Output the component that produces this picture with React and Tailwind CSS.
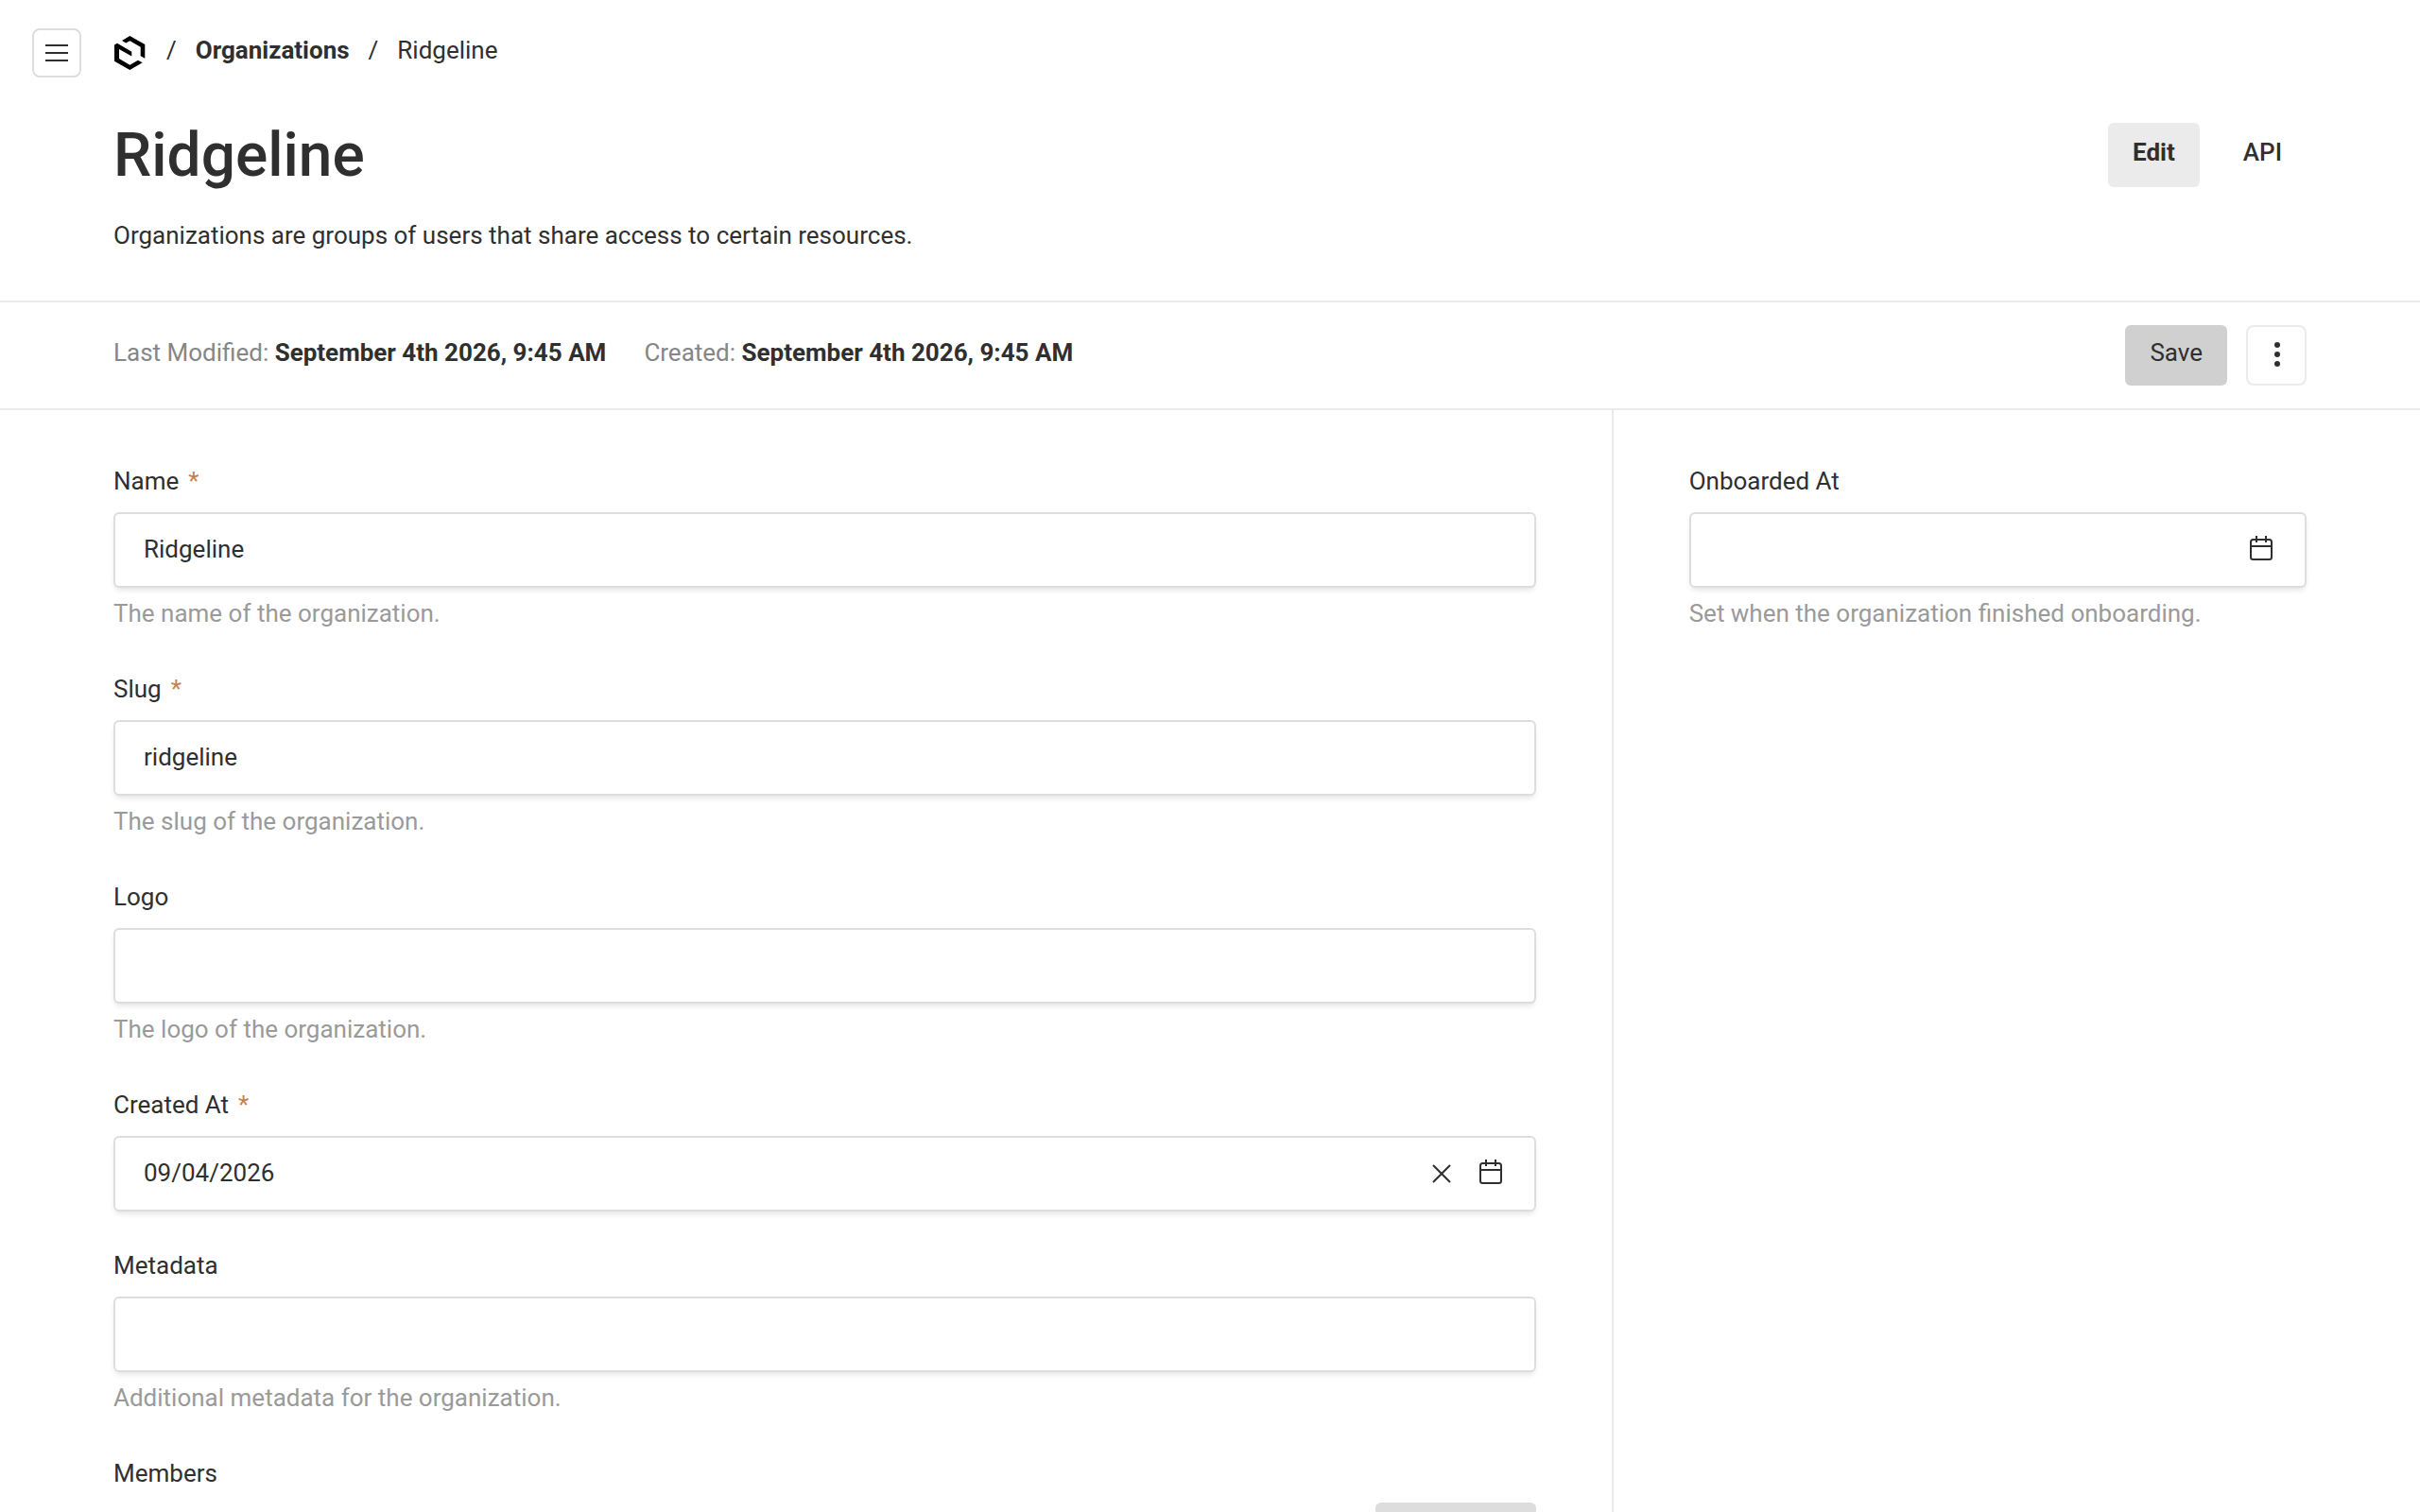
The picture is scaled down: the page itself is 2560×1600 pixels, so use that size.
import React from "react";

function CalendarIcon() {
  return (
    <svg className="size-10" viewBox="0 0 40 40" fill="none" stroke="currentColor" strokeWidth="2" aria-hidden="true">
      <rect x="9" y="9" width="22" height="21" rx="2.5" />
      <path d="M15 5V12M25 5V12M9 16H31" />
    </svg>
  );
}

function CloseIcon() {
  return (
    <svg className="size-10" viewBox="0 0 40 40" fill="none" stroke="currentColor" strokeWidth="2" aria-hidden="true">
      <path d="M29 11L11 29M11 11L29 29" />
    </svg>
  );
}

function Field({ id, label, required, value = "", description, date, clearable }) {
  return (
    <div>
      <label htmlFor={id} className="mb-3.5 block leading-[38px]">
        {label}
        {required && <span className="ml-2.5 text-[#c67f4e]">*</span>}
      </label>
      <div className="flex h-20 items-center rounded-md border-2 border-[#dddddd] bg-white pl-[30px] pr-[26px] shadow-[0_4px_6px_-2px_rgba(0,0,0,0.12)]">
        <input
          id={id}
          type="text"
          defaultValue={value}
          className="min-w-0 flex-1 bg-transparent pb-0.5 leading-10 outline-none"
        />
        {clearable && (
          <button type="button" aria-label={`Clear ${label}`} className="mr-3">
            <CloseIcon />
          </button>
        )}
        {date && (
          <button type="button" aria-label={`Choose ${label}`}>
            <CalendarIcon />
          </button>
        )}
      </div>
      {description && <p className="pb-1 pt-2 leading-[38px] text-[#9a9a9a]">{description}</p>}
    </div>
  );
}

export default function App() {
  return (
    <div className="h-screen overflow-hidden bg-white font-['Roboto',sans-serif] text-[26px] leading-10 text-[#2f2f2f]">
      <header className="flex h-[106px] items-start pl-[34px] pt-[30px]">
        <button
          type="button"
          aria-label="Open menu"
          className="flex size-[52px] items-center justify-center rounded-lg border-2 border-[#dddddd]"
        >
          <svg className="size-10" viewBox="0 0 20 20" fill="none" stroke="currentColor" aria-hidden="true">
            <path d="M4 6H16M4 10H16M4 14H16" />
          </svg>
        </button>
        <nav aria-label="Breadcrumb" className="ml-[34px] flex gap-5 leading-[46px]">
          <a href="#home" aria-label="Home" className="pt-2">
            <svg className="size-9" viewBox="0 0 36 36" fill="#000" aria-hidden="true">
              <path d="M17.3 0L33.3 8.9V23.8L28.7 21.2V11.8L17.3 5.3L13.3 7.6L9 5Z" />
              <path d="M4 7.8L19.3 16.7V21.6L6 14V24L17.3 30.7L26 25.7L30.7 28.3L17.3 36L1 26.7V9.5Z" />
            </svg>
          </a>
          <span>/</span>
          <a href="#organizations" className="font-bold">Organizations</a>
          <span>/</span>
          <span>Ridgeline</span>
        </nav>
      </header>

      <section className="flex items-start justify-between border-b-2 border-[#ebebeb] px-[120px] pb-12 pt-5">
        <div>
          <h1 className="text-[64px] font-medium leading-[78px]">Ridgeline</h1>
          <p className="mt-6 leading-[42px]">Organizations are groups of users that share access to certain resources.</p>
        </div>
        <nav aria-label="Document views" className="flex gap-5 pt-1">
          <a href="#edit" className="rounded-md bg-[#ebebeb] px-[26px] pb-[17px] pt-[11px] font-bold">Edit</a>
          <a href="#api" className="rounded-md px-[26px] pb-[17px] pt-[11px] font-medium">API</a>
        </nav>
      </section>

      <section className="flex h-[114px] items-center justify-between border-b-2 border-[#ebebeb] px-[120px]">
        <div className="flex gap-10 pb-1.5">
          <p><span className="text-[#868686]">Last Modified: </span><b>September 4th 2026, 9:45 AM</b></p>
          <p><span className="text-[#868686]">Created: </span><b>September 4th 2026, 9:45 AM</b></p>
        </div>
        <div className="flex gap-5">
          <button type="button" className="h-16 rounded-md bg-[#d0d0d0] px-[26px] pb-1.5">Save</button>
          <button
            type="button"
            aria-label="More actions"
            className="flex size-16 items-center justify-center rounded-lg border-2 border-[#ebebeb]"
          >
            <svg className="size-10" viewBox="0 0 40 40" fill="currentColor" aria-hidden="true">
              <circle cx="21" cy="9" r="3" />
              <circle cx="21" cy="19" r="3" />
              <circle cx="21" cy="29" r="3" />
            </svg>
          </button>
        </div>
      </section>

      <div className="flex h-full">
        <main className="flex w-2/3 flex-col gap-[38px] border-r-2 border-[#ebebeb] pl-[120px] pr-20 pt-14">
          <Field id="name" label="Name" required value="Ridgeline" description="The name of the organization." />
          <Field id="slug" label="Slug" required value="ridgeline" description="The slug of the organization." />
          <Field id="logo" label="Logo" description="The logo of the organization." />
          <Field id="created-at" label="Created At" required value="09/04/2026" date clearable />
          <Field id="metadata" label="Metadata" description="Additional metadata for the organization." />
          <section>
            <h2 className="leading-[38px]">Members</h2>
            <div className="mt-3 flex justify-end">
              <button type="button" aria-label="Columns" className="h-14 w-[170px] rounded-md bg-[#dddddd]" />
            </div>
          </section>
        </main>
        <aside className="w-1/3 pl-20 pr-[120px] pt-14">
          <Field id="onboarded-at" label="Onboarded At" date description="Set when the organization finished onboarding." />
        </aside>
      </div>
    </div>
  );
}
